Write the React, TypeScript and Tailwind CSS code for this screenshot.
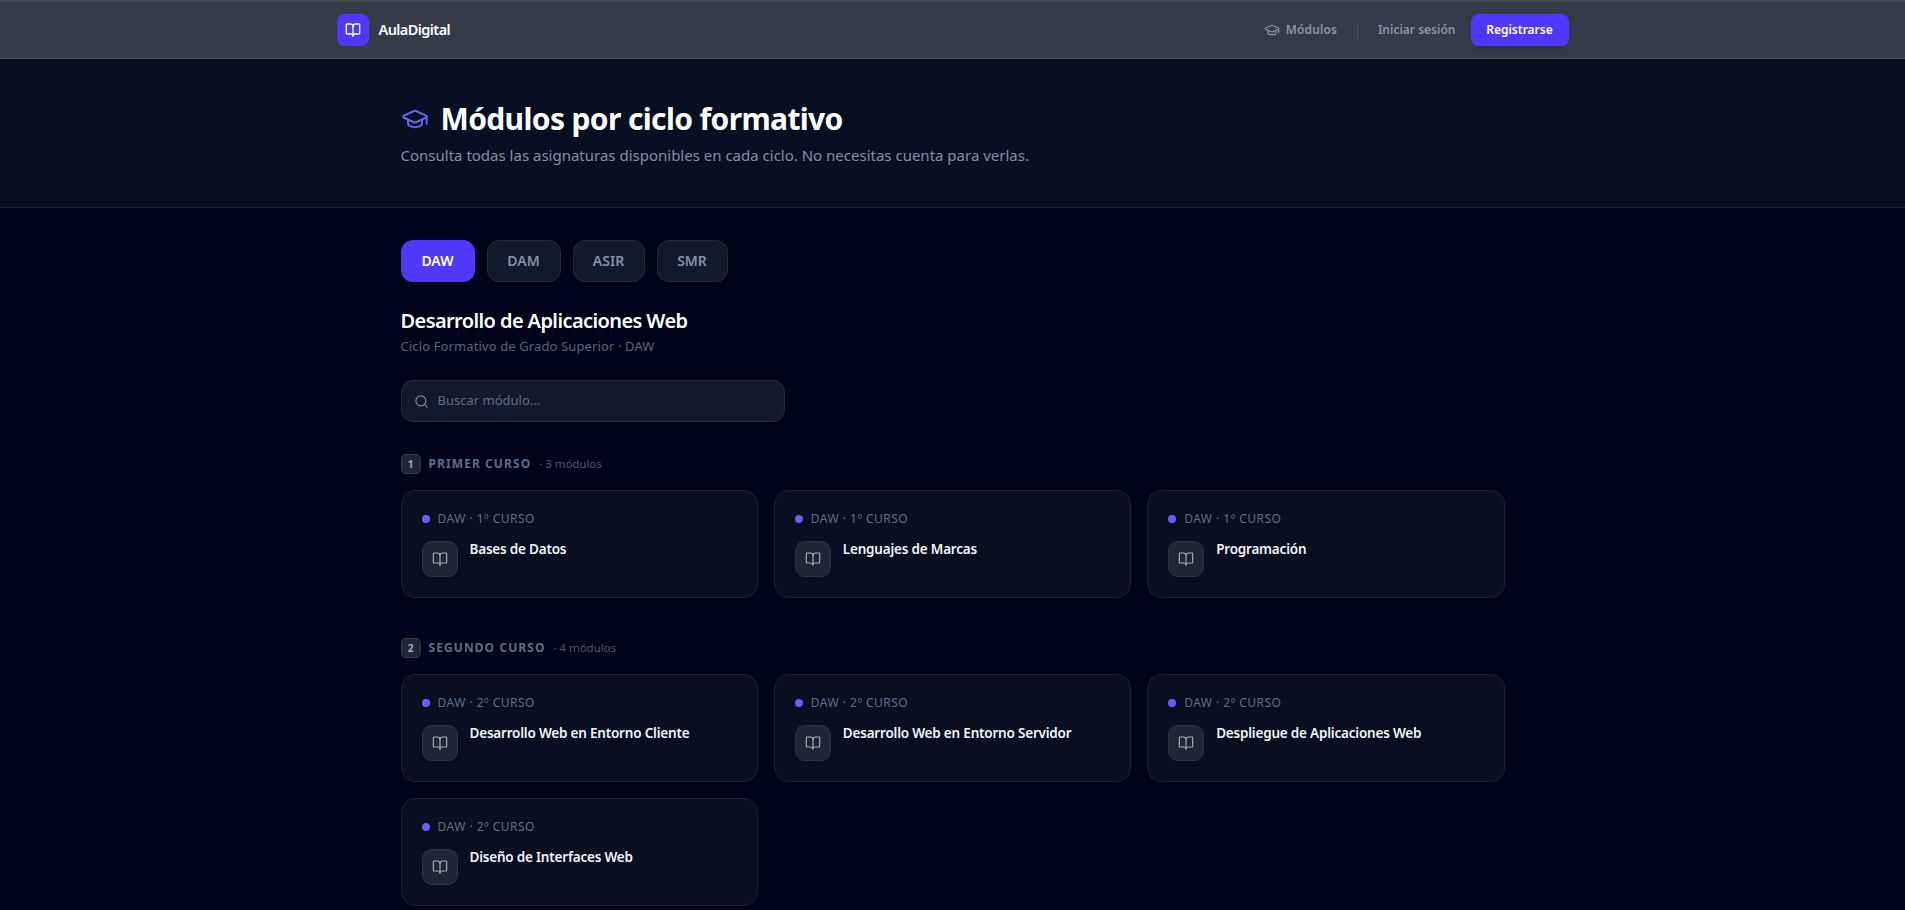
import { BookOpen, GraduationCap, Search } from "lucide-react";

const font = "font-['Noto_Sans','Open_Sans',sans-serif]";

function Card({ label, title }: { label: string; title: string }) {
  return (
    <div className="h-[108px] rounded-[14px] border border-[#1a2032] bg-[#090f20] px-5 pt-5 pb-5">
      <div className="flex items-center gap-2">
        <span className="h-2 w-2 rounded-full bg-[#6a5cff]" />
        <span className="text-xs leading-4 tracking-[0.04em] text-[#5e6d8c]">{label}</span>
      </div>
      <div className="mt-[14px] flex items-start gap-3">
        <div className="flex h-9 w-9 items-center justify-center rounded-[10px] border border-[#2a3445] bg-[#1d2736]">
          <BookOpen size={16} strokeWidth={1.75} className="text-[#a3aebd]" />
        </div>
        <div className="-mt-[2px] text-[13.5px] font-semibold leading-5 tracking-[-0.2px] text-[#f1f5f9]">{title}</div>
      </div>
    </div>
  );
}

function Section({ n, name, count, label, items }: { n: number; name: string; count: string; label: string; items: string[] }) {
  return (
    <section className="mb-[40px]">
      <div className="mb-4 flex h-5 items-center">
        <span className="flex h-5 w-5 items-center justify-center rounded-[5px] border border-[#2e3a4d] bg-[#1d2736] text-[10px] font-bold text-[#a3aebd]">{n}</span>
        <span className="ml-2 text-xs font-bold tracking-[0.09em] text-[#5e6d8c]">{name}</span>
        <span className="ml-2 text-[11.5px] tracking-[-0.05px] text-[#485674]">· {count}</span>
      </div>
      <div className="grid grid-cols-3 gap-x-4 gap-y-4">
        {items.map((t) => (
          <Card key={t} label={label} title={t} />
        ))}
      </div>
    </section>
  );
}

export default function App() {
  return (
    <div className={`h-screen overflow-hidden bg-[#01031a] ${font}`}>
      <header className="h-[59px] border-t-2 border-b border-t-[#46474b] border-b-[#4a4f5c] bg-[#373b49]">
        <div className="mx-auto flex h-full w-[1232px] items-center">
          <div className="flex h-8 w-8 items-center justify-center rounded-lg bg-[#5038fb]">
            <BookOpen size={16} strokeWidth={2} className="text-white" />
          </div>
          <span className="ml-2.5 text-[14.5px] font-semibold tracking-[-0.04em] text-white">AulaDigital</span>
          <div className="ml-auto flex items-center text-xs font-semibold text-[#8a95ab]">
            <GraduationCap size={16} strokeWidth={1.75} />
            <span className="ml-1.5 tracking-[0.1px]">Módulos</span>
            <span className="mx-5 h-4 w-px bg-[#4a4f5c]" />
            <span>Iniciar sesión</span>
            <button className="ml-[15px] flex h-8 w-[98px] items-center justify-center rounded-lg bg-[#5038fb] text-xs font-semibold text-white shadow-md">Registrarse</button>
          </div>
        </div>
      </header>

      <div className="h-[149px] border-b border-[#1a2032] bg-[#080f22]">
        <div className="mx-auto w-[1104px] pt-[42px]">
          <div className="flex items-center gap-3">
            <GraduationCap size={28} strokeWidth={1.75} className="text-[#6366f1]" />
            <h1 className="text-[30px] font-bold leading-9 tracking-[-0.63px] text-white">Módulos por ciclo formativo</h1>
          </div>
          <p className="mt-1.5 text-[15px] leading-6 text-[#8390a9]">Consulta todas las asignaturas disponibles en cada ciclo. No necesitas cuenta para verlas.</p>
        </div>
      </div>

      <main className="mx-auto w-[1104px] pt-8">
        <div className="flex gap-3">
          <button className="h-[42px] w-[74px] rounded-xl bg-[#5038fb] text-sm font-semibold text-white">DAW</button>
          {["DAM", "ASIR", "SMR"].map((t, i) => (
            <button key={t} className={`h-[42px] ${i === 0 ? "w-[74px]" : i === 1 ? "w-[72px]" : "w-[71px]"} rounded-xl border border-[#232c3d] bg-[#111a2c] text-sm font-semibold text-[#8393ae]`}>{t}</button>
          ))}
        </div>
        <h2 className="mt-[25px] text-xl font-semibold leading-7 tracking-[-0.6px] text-white">Desarrollo de Aplicaciones Web</h2>
        <p className="mt-px text-[13px] leading-5 tracking-[0.12px] text-[#56657f]">Ciclo Formativo de Grado Superior · DAW</p>
        <div className="mt-6 flex h-[42px] w-[384px] items-center rounded-xl border border-[#232c3d] bg-[#111a2c] px-3">
          <Search size={15} strokeWidth={1.75} className="text-[#8390a9]" />
          <span className="ml-[9px] text-[13px] text-[#5e6d8c]">Buscar módulo...</span>
        </div>
        <div className="mt-8">
          <Section n={1} name="PRIMER CURSO" count="3 módulos" label="DAW · 1º CURSO" items={["Bases de Datos", "Lenguajes de Marcas", "Programación"]} />
          <Section n={2} name="SEGUNDO CURSO" count="4 módulos" label="DAW · 2º CURSO" items={["Desarrollo Web en Entorno Cliente", "Desarrollo Web en Entorno Servidor", "Despliegue de Aplicaciones Web", "Diseño de Interfaces Web"]} />
        </div>
      </main>
    </div>
  );
}
